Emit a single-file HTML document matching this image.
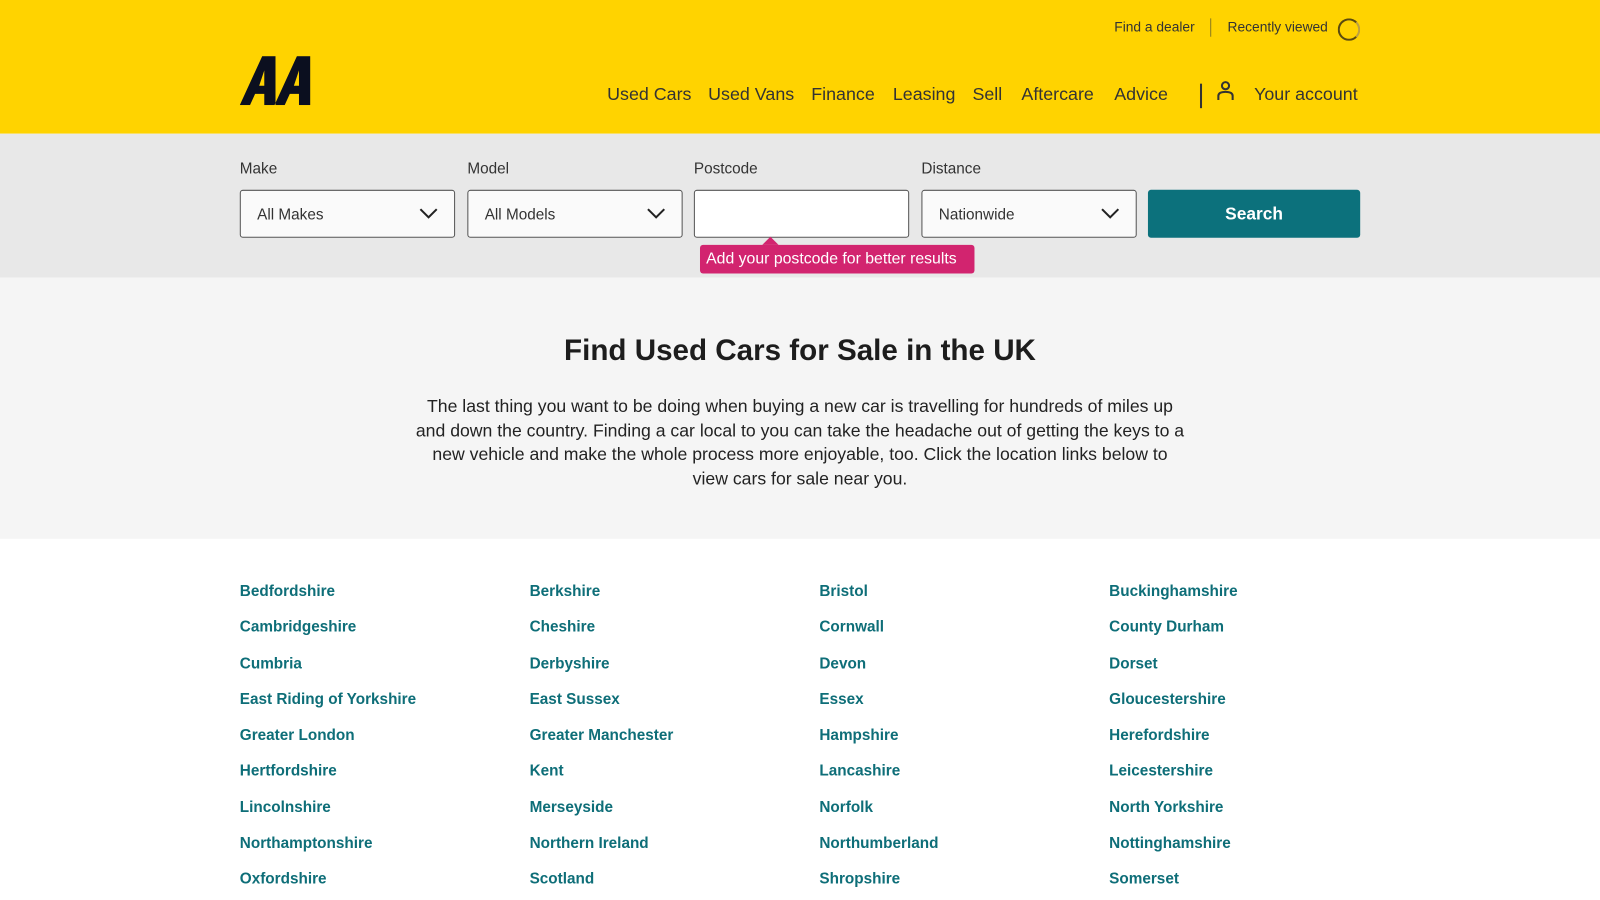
<!DOCTYPE html>
<html><head><meta charset="utf-8"><style>
*{box-sizing:border-box;margin:0;padding:0}
body{width:1600px;height:900px;overflow:hidden;font-family:"Liberation Sans",sans-serif;background:#fff;color:#1d1d1d}
#w{position:absolute;left:0;top:0;width:1568px;height:882px;transform:scale(1.0204);transform-origin:0 0}
.hdr{position:absolute;top:0;left:0;width:1568px;height:131px;background:#ffd300}
.top{position:absolute;top:19px;font-size:13.5px;color:#333}
.nav{position:absolute;top:82px;font-size:17.5px;color:#333}
.srch{position:absolute;top:131px;left:0;width:1568px;height:141px;background:#e8e8e8}
.lbl{position:absolute;top:157px;font-size:15px;color:#333}
.box{position:absolute;top:186px;width:211px;height:47px;background:#fafafa;border:1px solid #555;border-radius:3px;font-size:15px;padding:15px 16px;color:#333}
.box svg{position:absolute;right:16px;top:16px}
.btn{position:absolute;left:1125px;top:186px;width:208px;height:47px;background:#0c717c;color:#fff;border-radius:3px;font-weight:bold;font-size:17px;text-align:center;line-height:47px}
.tip{position:absolute;left:686px;top:240px;width:269px;height:28px;background:#d2246f;color:#fff;border-radius:3px;font-size:15.5px;line-height:28px;padding-left:6px;white-space:nowrap}
.tip:before{content:"";position:absolute;left:61px;top:-8px;border:8px solid transparent;border-top:0;border-bottom-color:#d2246f}
.intro{position:absolute;top:272px;left:0;width:1568px;height:256px;background:#f5f5f5;text-align:center}
h1{font-size:29px;margin-top:56px;font-weight:bold;color:#1d1d1d}
.intro p{width:800px;margin:26px auto 0;font-size:17.3px;line-height:23.5px;color:#222;white-space:nowrap}
.l{position:absolute;font-size:15px;font-weight:bold;color:#0e6e78}
</style></head><body><div id="w">
<div class="hdr">
<svg style="position:absolute;left:235px;top:55px" width="70" height="48" viewBox="0 0 70 48"><path d="M0 48L22 0H35V48H24V37H15L10 48ZM19 29H24V14Z M34 48L56 0H69V48H58V37H49L44 48ZM53 29H58V14Z" fill="#0b0f1f" fill-rule="evenodd"/></svg>
<div class="top" style="left:1092px">Find a dealer</div>
<div style="position:absolute;left:1186px;top:18px;width:1px;height:18px;background:#8a7a20"></div>
<div class="top" style="left:1203px">Recently viewed</div>
<div style="position:absolute;left:1311px;top:18px;width:22px;height:22px;border:2px solid #5a4a10;border-radius:50%;border-right-color:#bda040"></div>
<div class="nav" style="left:595px">Used Cars</div>
<div class="nav" style="left:694px">Used Vans</div>
<div class="nav" style="left:795px">Finance</div>
<div class="nav" style="left:875px">Leasing</div>
<div class="nav" style="left:953px">Sell</div>
<div class="nav" style="left:1001px">Aftercare</div>
<div class="nav" style="left:1092px">Advice</div>
<div style="position:absolute;left:1176px;top:82px;width:2px;height:24px;background:#333"></div>
<svg style="position:absolute;left:1192px;top:79px" width="18" height="20" viewBox="0 0 18 20"><circle cx="9" cy="5" r="3.5" fill="none" stroke="#333" stroke-width="2"/><path d="M2 19V15Q2 11 9 11Q16 11 16 15V19" fill="none" stroke="#333" stroke-width="2"/></svg>
<div class="nav" style="left:1229px">Your account</div>
</div>
<div class="srch"></div>
<div class="lbl" style="left:235px">Make</div>
<div class="lbl" style="left:458px">Model</div>
<div class="lbl" style="left:680px">Postcode</div>
<div class="lbl" style="left:903px">Distance</div>
<div class="box" style="left:235px">All Makes<svg width="18" height="12" viewBox="0 0 18 12"><path d="M1 2L9 10L17 2" fill="none" stroke="#222" stroke-width="2"/></svg></div>
<div class="box" style="left:458px">All Models<svg width="18" height="12" viewBox="0 0 18 12"><path d="M1 2L9 10L17 2" fill="none" stroke="#222" stroke-width="2"/></svg></div>
<div class="box" style="left:680px;background:#fff"></div>
<div class="box" style="left:903px">Nationwide<svg width="18" height="12" viewBox="0 0 18 12"><path d="M1 2L9 10L17 2" fill="none" stroke="#222" stroke-width="2"/></svg></div>
<div class="btn">Search</div>
<div class="tip">Add your postcode for better results</div>
<div class="intro"><h1>Find Used Cars for Sale in the UK</h1>
<p>The last thing you want to be doing when buying a new car is travelling for hundreds of miles up<br>and down the country. Finding a car local to you can take the headache out of getting the keys to a<br>new vehicle and make the whole process more enjoyable, too. Click the location links below to<br>view cars for sale near you.</p></div>
<div id="links"></div>
</div>
<script>
var d=[["Bedfordshire","Berkshire","Bristol","Buckinghamshire"],["Cambridgeshire","Cheshire","Cornwall","County Durham"],["Cumbria","Derbyshire","Devon","Dorset"],["East Riding of Yorkshire","East Sussex","Essex","Gloucestershire"],["Greater London","Greater Manchester","Hampshire","Herefordshire"],["Hertfordshire","Kent","Lancashire","Leicestershire"],["Lincolnshire","Merseyside","Norfolk","North Yorkshire"],["Northamptonshire","Northern Ireland","Northumberland","Nottinghamshire"],["Oxfordshire","Scotland","Shropshire","Somerset"]];
var h="";d.forEach(function(r,i){r.forEach(function(t,j){h+='<div class="l" style="left:'+(235+284*j)+'px;top:'+(571+35.25*i)+'px">'+t+'</div>'})});
document.getElementById("links").innerHTML=h;
</script>
</body></html>
